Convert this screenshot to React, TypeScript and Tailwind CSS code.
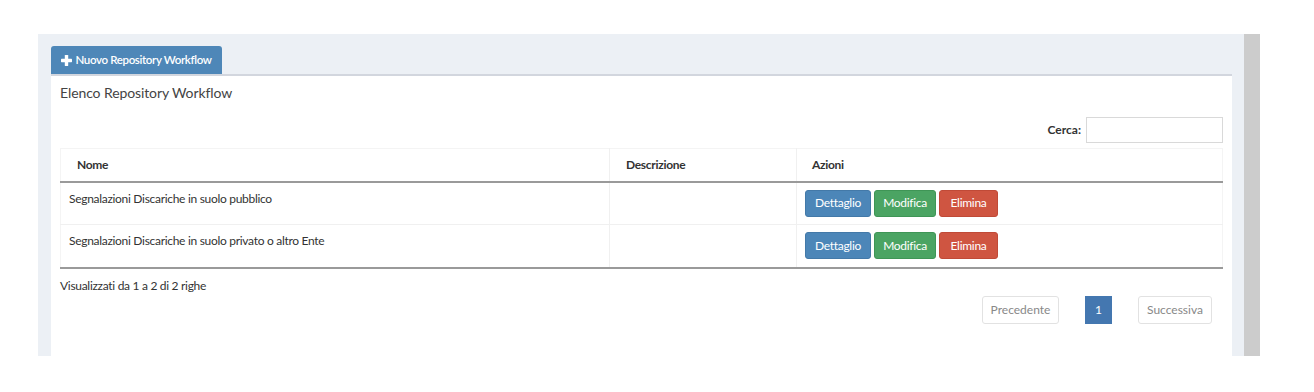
import React from 'react';

const rows = [
  'Segnalazioni Discariche in suolo pubblico',
  'Segnalazioni Discariche in suolo privato o altro Ente',
];

const PlusIcon = () => (
  <svg width="11" height="11" viewBox="0 0 11 11" className="mr-[3px]">
    <rect x="3.8" y="0" width="3.4" height="11" rx="0.6" fill="white" />
    <rect x="0" y="3.8" width="11" height="3.4" rx="0.6" fill="white" />
  </svg>
);

const ActionButtons = () => (
  <div className="flex gap-[3px] tracking-[-0.3px]">
    <button className="h-[27px] w-[66px] rounded-[3px] bg-[#4c86b8] border border-[#4379a8] text-white text-[12px]">
      Dettaglio
    </button>
    <button className="h-[27px] w-[62px] rounded-[3px] bg-[#4ba463] border border-[#3f9556] text-white text-[12px]">
      Modifica
    </button>
    <button className="h-[27px] w-[59px] rounded-[3px] bg-[#cf5541] border border-[#c04a37] text-white text-[12px]">
      Elimina
    </button>
  </div>
);

export default function App() {
  return (
    <div
      className="bg-white h-[392px] pt-[34px] pl-[38px]"
      style={{ fontFamily: 'Lato, "Open Sans", sans-serif' }}
    >
      <div className="flex w-[1222px] h-[322px]">
        <div className="flex-1 bg-[#ecf0f5] pt-3 pl-[13px] pr-3 flex flex-col">
          {/* Add button */}
          <div>
            <button className="h-[28px] w-[171px] justify-center rounded-t-[3px] bg-[#4e87b8] text-white text-[11.5px] font-semibold tracking-[-0.35px] flex items-center">
              <PlusIcon />
              Nuovo Repository Workflow
            </button>
          </div>

          {/* Box */}
          <div className="flex-1 bg-white border-t-2 border-[#d2d6de] px-[9px]">
            <div className="h-[32px] flex items-center text-[14px] tracking-[-0.1px] text-[#444]">
              Elenco Repository Workflow
            </div>

            <div className="flex justify-end items-center mt-[9px] gap-[5px]">
              <span className="text-[12px] font-bold text-[#333]">Cerca:</span>
              <div className="w-[137px] h-[26px] border border-[#d9d9d9]" />
            </div>

            {/* Table */}
            <table className="w-full mt-[5px] border-collapse border border-[#f4f4f4] text-[12px] text-[#333] tracking-[-0.3px]">
              <thead>
                <tr className="h-[33px] border-b-2 border-[#9a9a9a]">
                  <th className="w-[549px] text-left font-bold pl-[16px] border-r border-[#f0f0f0]">Nome</th>
                  <th className="w-[187px] text-left font-bold pl-[16px] border-r border-[#f0f0f0]">Descrizione</th>
                  <th className="text-left font-bold pl-[15px]">Azioni</th>
                </tr>
              </thead>
              <tbody>
                {rows.map((r, i) => (
                  <tr
                    key={r}
                    className={`h-[43px] ${i === rows.length - 1 ? 'border-b-2 border-[#9a9a9a]' : 'border-b border-[#f0f0f0]'}`}
                  >
                    <td className="align-top pt-[7px] pl-[8px] border-r border-[#f0f0f0]">{r}</td>
                    <td className="border-r border-[#f0f0f0]" />
                    <td className="pl-[8px]">
                      <ActionButtons />
                    </td>
                  </tr>
                ))}
              </tbody>
            </table>

            {/* Footer */}
            <div className="text-[12px] text-[#333] mt-[8px] tracking-[-0.3px]">Visualizzati da 1 a 2 di 2 righe</div>
            <div className="flex justify-end pr-[11px] mt-[1px] gap-[26px] text-[12px]">
              <span className="h-[28px] w-[77px] flex items-center justify-center border border-[#e2e2e2] rounded-[3px] text-[#888]">
                Precedente
              </span>
              <span className="h-[28px] w-[27px] flex items-center justify-center bg-[#4477b0] text-white">1</span>
              <span className="h-[28px] w-[74px] flex items-center justify-center border border-[#e2e2e2] rounded-[3px] text-[#888]">
                Successiva
              </span>
            </div>
          </div>
        </div>
        <div className="w-4 bg-[#cccccc]" />
      </div>
    </div>
  );
}
